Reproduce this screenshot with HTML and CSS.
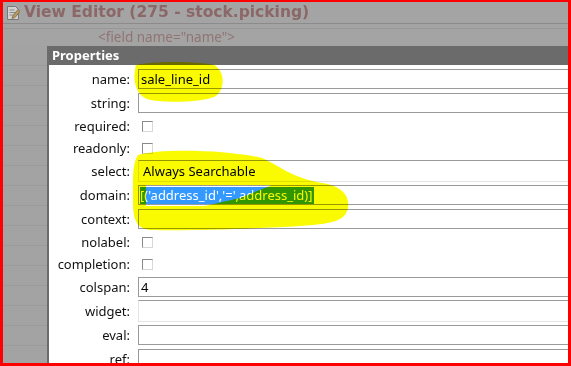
FILE: index.html
```html
<!DOCTYPE html>
<html>
	<head>
		<title>View Editor</title>
		<link rel="stylesheet" href="styles.css">
	</head>
	<body>
		<div class="frame">
			<div class="titlebar">
				<svg class="icon" viewBox="0 0 14 16" width="14" height="16">
					<path d="M1.5 1.5h8l3 3v10h-11z" fill="#d2d2d2" stroke="#787878" />
					<path d="M3.5 5h5M3.5 7.5h6M3.5 10h4" stroke="#8a8a8a" />
					<path d="M6 13.5l1-3 5-6 2 2-5 6z" fill="#b89a5a" stroke="#6e6048" stroke-width="0.7" />
				</svg>
				<h1>View Editor (275 - stock.picking)</h1>
			</div>
			<div class="tagline">&lt;field name="name"&gt;</div>
			<div class="main">
				<div class="under"></div>
				<div class="dialog">
					<div class="dialog-head">Properties</div>
					<div class="props">
						<label>name:</label>
						<div class="f"><input type="text" value="sale_line_id"></div>
						<label>string:</label>
						<div class="f"><input type="text" value=""></div>
						<label>required:</label>
						<div class="f cb"><input type="checkbox"></div>
						<label>readonly:</label>
						<div class="f cb"><input type="checkbox"></div>
						<label>select:</label>
						<div class="f"><div class="select">Always Searchable</div></div>
						<label>domain:</label>
						<div class="f"><div class="box"><span class="sel">[('address_id','=',address_id)]</span></div></div>
						<label>context:</label>
						<div class="f"><input type="text" value=""></div>
						<label>nolabel:</label>
						<div class="f cb"><input type="checkbox"></div>
						<label>completion:</label>
						<div class="f cb"><input type="checkbox"></div>
						<label>colspan:</label>
						<div class="f"><input type="text" value="4"></div>
						<label>widget:</label>
						<div class="f"><div class="select"></div></div>
						<label>eval:</label>
						<div class="f"><input type="text" value=""></div>
						<label>ref:</label>
						<div class="f"><input type="text" value=""></div>
					</div>
				</div>
			</div>
		</div>
		<!-- highlighter marks drawn over the screenshot -->
		<svg class="marker" viewBox="0 0 571 366" width="571" height="366">
			<path d="M136 65 C150 61 200 61 214 65 C225 70 226 91 214 97 C196 103 162 103 147 99 C136 95 132 80 136 65 Z" />
			<path fill-rule="evenodd" d="M138 155 C160 148 230 150 262 158 C280 166 292 178 322 183 C342 186 350 196 348 208 C345 222 330 224 300 226 C250 229 190 231 150 230 C136 228 133 220 133 200 C133 180 132 164 138 155 Z M146 185 L272 185 L240 198 L205 206 L146 206 Z" />
		</svg>
	</body>
</html>
```

FILE: styles.css
```css
* {
	box-sizing: border-box;
}

body {
	margin: 0;
	position: relative;
	font-family: "Noto Sans", sans-serif;
}

.frame {
	width: 571px;
	height: 366px;
	border: 3px solid #f00;
	border-top-width: 2px;
	background: #a4a4a4;
	overflow: hidden;
	display: flex;
	flex-direction: column;
}

.titlebar {
	height: 22px;
	display: flex;
	align-items: center;
	gap: 4px;
	padding-left: 3px;
	border-bottom: 1px solid #8b8b8b;
	flex: none;
}

.titlebar .icon {
	flex: none;
}

.titlebar h1 {
	margin: 0;
	font-family: "DejaVu Sans", sans-serif;
	font-size: 15.5px;
	line-height: 21px;
	color: #8c6767;
	white-space: nowrap;
}

.tagline {
	margin-top: 4px;
	border-top: 1px solid #979797;
	height: 17px;
	padding-left: 95px;
	font-size: 13.5px;
	line-height: 16px;
	color: #917474;
	white-space: nowrap;
	flex: none;
}

.main {
	flex: 1;
	display: flex;
	padding-top: 1px;
	min-height: 0;
}

.under {
	width: 44px;
	flex: none;
	background: repeating-linear-gradient(to bottom, #a3a3a3 0 19px, #9b9b9b 19px 20px);
}

.dialog {
	flex: 1;
	background: #fff;
	border-left: 2px solid #6b6b6b;
	overflow: hidden;
}

.dialog-head {
	height: 19px;
	background: #6b6b6b;
	color: #fff;
	font-weight: bold;
	font-size: 13px;
	line-height: 19px;
	padding-left: 3px;
}

.props {
	padding-top: 2px;
	display: grid;
	grid-template-columns: 84px 1fr;
	align-items: center;
}

.props label {
	text-align: right;
	padding-right: 3px;
	font-size: 13px;
	line-height: 16px;
	color: #111;
	white-space: nowrap;
}

.props .f {
	height: 24px;
	display: flex;
	align-items: center;
	overflow: hidden;
}

.props .f.cb {
	height: 22px;
}

.props input[type="text"], .props .box {
	flex: none;
	width: 440px;
	height: 20px;
	margin: 0 0 0 5px;
	border: 1px solid #9a9a9a;
	padding: 0 2px;
	font: 13px "Noto Sans", sans-serif;
	color: #000;
	background: #fff;
	outline: none;
}

.props .box {
	padding: 0 1px;
	line-height: 18px;
	white-space: nowrap;
}

.props .box .sel {
	display: inline-block;
	background: #3399ff;
	color: #fff;
	line-height: 17px;
	padding-right: 1px;
}

.props .select {
	flex: none;
	width: 440px;
	height: 22px;
	margin-left: 5px;
	border: 1px solid #e4e4e4;
	border-top-color: #9a9a9a;
	padding-left: 4px;
	font-size: 13px;
	line-height: 20px;
	color: #000;
	white-space: nowrap;
}

.props input[type="checkbox"] {
	appearance: none;
	width: 11px;
	height: 11px;
	margin: 0 0 0 9px;
	border: 1px solid;
	border-color: #8a8a8a #d8d8d8 #d8d8d8 #8a8a8a;
	background: #fff;
}

.marker {
	position: absolute;
	left: 0;
	top: 0;
	pointer-events: none;
	mix-blend-mode: multiply;
	fill: #fafa00;
}
```
